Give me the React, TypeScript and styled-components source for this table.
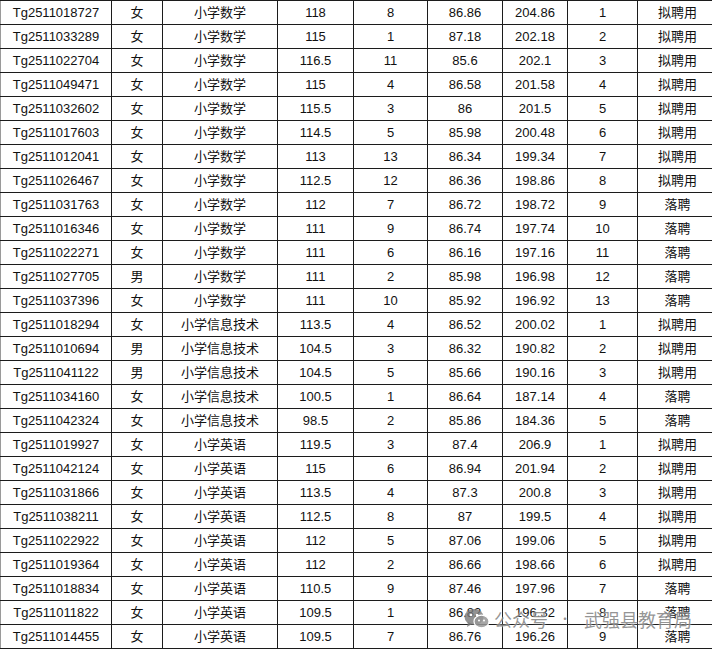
import styled, { createGlobalStyle } from 'styled-components';

const GlobalStyle = createGlobalStyle`
    html, body {
        margin: 0;
        padding: 0;
        background: #fff;
        overflow: hidden;
    }
`;

type Row = [string, string, string, string, string, string, string, string, string];

const rows: Row[] = [
    ['Tg2511018727', '女', '小学数学', '118', '8', '86.86', '204.86', '1', '拟聘用'],
    ['Tg2511033289', '女', '小学数学', '115', '1', '87.18', '202.18', '2', '拟聘用'],
    ['Tg2511022704', '女', '小学数学', '116.5', '11', '85.6', '202.1', '3', '拟聘用'],
    ['Tg2511049471', '女', '小学数学', '115', '4', '86.58', '201.58', '4', '拟聘用'],
    ['Tg2511032602', '女', '小学数学', '115.5', '3', '86', '201.5', '5', '拟聘用'],
    ['Tg2511017603', '女', '小学数学', '114.5', '5', '85.98', '200.48', '6', '拟聘用'],
    ['Tg2511012041', '女', '小学数学', '113', '13', '86.34', '199.34', '7', '拟聘用'],
    ['Tg2511026467', '女', '小学数学', '112.5', '12', '86.36', '198.86', '8', '拟聘用'],
    ['Tg2511031763', '女', '小学数学', '112', '7', '86.72', '198.72', '9', '落聘'],
    ['Tg2511016346', '女', '小学数学', '111', '9', '86.74', '197.74', '10', '落聘'],
    ['Tg2511022271', '女', '小学数学', '111', '6', '86.16', '197.16', '11', '落聘'],
    ['Tg2511027705', '男', '小学数学', '111', '2', '85.98', '196.98', '12', '落聘'],
    ['Tg2511037396', '女', '小学数学', '111', '10', '85.92', '196.92', '13', '落聘'],
    ['Tg2511018294', '女', '小学信息技术', '113.5', '4', '86.52', '200.02', '1', '拟聘用'],
    ['Tg2511010694', '男', '小学信息技术', '104.5', '3', '86.32', '190.82', '2', '拟聘用'],
    ['Tg2511041122', '男', '小学信息技术', '104.5', '5', '85.66', '190.16', '3', '拟聘用'],
    ['Tg2511034160', '女', '小学信息技术', '100.5', '1', '86.64', '187.14', '4', '落聘'],
    ['Tg2511042324', '女', '小学信息技术', '98.5', '2', '85.86', '184.36', '5', '落聘'],
    ['Tg2511019927', '女', '小学英语', '119.5', '3', '87.4', '206.9', '1', '拟聘用'],
    ['Tg2511042124', '女', '小学英语', '115', '6', '86.94', '201.94', '2', '拟聘用'],
    ['Tg2511031866', '女', '小学英语', '113.5', '4', '87.3', '200.8', '3', '拟聘用'],
    ['Tg2511038211', '女', '小学英语', '112.5', '8', '87', '199.5', '4', '拟聘用'],
    ['Tg2511022922', '女', '小学英语', '112', '5', '87.06', '199.06', '5', '拟聘用'],
    ['Tg2511019364', '女', '小学英语', '112', '2', '86.66', '198.66', '6', '拟聘用'],
    ['Tg2511018834', '女', '小学英语', '110.5', '9', '87.46', '197.96', '7', '落聘'],
    ['Tg2511011822', '女', '小学英语', '109.5', '1', '86.82', '196.32', '8', '落聘'],
    ['Tg2511014455', '女', '小学英语', '109.5', '7', '86.76', '196.26', '9', '落聘'],
];

const colWidths = [111, 51, 115, 76, 74, 75, 65, 70, 80];

const Sheet = styled.div`
    position: relative;
    width: 712px;
    height: 651px;
    overflow: hidden;
`;

const Table = styled.table`
    border-collapse: collapse;
    table-layout: fixed;
    width: ${colWidths.reduce((a, b) => a + b, 0)}px;
    font-family: 'Liberation Sans', Arial, 'Noto Sans CJK SC', sans-serif;
    font-size: 13px;
    color: #111;
`;

const Tr = styled.tr`
    height: 24px;
`;

const Td = styled.td<{ $first?: boolean }>`
    border: 1px solid #1c1c1c;
    border-left-color: ${(p) => (p.$first ? '#9a9a9a' : '#1c1c1c')};
    padding: 0;
    height: 23px;
    box-sizing: border-box;
    text-align: center;
    vertical-align: middle;
    white-space: nowrap;
    line-height: 22px;
`;

const Watermark = styled.div`
    position: absolute;
    left: 464px;
    top: 606px;
    display: flex;
    align-items: center;
    gap: 4px;
    font-family: 'Noto Sans CJK SC', sans-serif;
    font-size: 18px;
    line-height: 26px;
    color: rgba(120, 120, 120, 0.78);
    text-shadow: 0 0 2px rgba(255, 255, 255, 0.9);
    pointer-events: none;
`;

const Dot = styled.span`
    margin: 0 9px 0 7px;
    font-size: 12px;
`;

const WeChatIcon = () => (
    <svg width="26" height="22" viewBox="0 0 26 22" fill="rgba(120,120,120,0.8)">
        <ellipse cx="10" cy="9" rx="9.5" ry="8" />
        <path d="M4 14 L3 19 L8 16 Z" />
        <ellipse cx="17.5" cy="13.5" rx="7.5" ry="6.3" fill="rgba(150,150,150,0.85)" stroke="#fff" strokeWidth="1.2" />
        <circle cx="7" cy="7" r="1.3" fill="#fff" />
        <circle cx="13" cy="7" r="1.3" fill="#fff" />
        <circle cx="15" cy="12.5" r="1" fill="#fff" />
        <circle cx="20" cy="12.5" r="1" fill="#fff" />
    </svg>
);

const App = () => {
    return (
        <Sheet>
            <GlobalStyle />
            <Table>
                <colgroup>
                    {colWidths.map((w, i) => (
                        <col key={i} style={{ width: w }} />
                    ))}
                </colgroup>
                <tbody>
                    {rows.map((r) => (
                        <Tr key={r[0]}>
                            {r.map((c, i) => (
                                <Td key={i} $first={i === 0}>
                                    {c}
                                </Td>
                            ))}
                        </Tr>
                    ))}
                </tbody>
            </Table>
            <Watermark>
                <WeChatIcon />
                <span>公众号</span>
                <Dot>·</Dot>
                <span>武强县教育局</span>
            </Watermark>
        </Sheet>
    );
};

export default App;
